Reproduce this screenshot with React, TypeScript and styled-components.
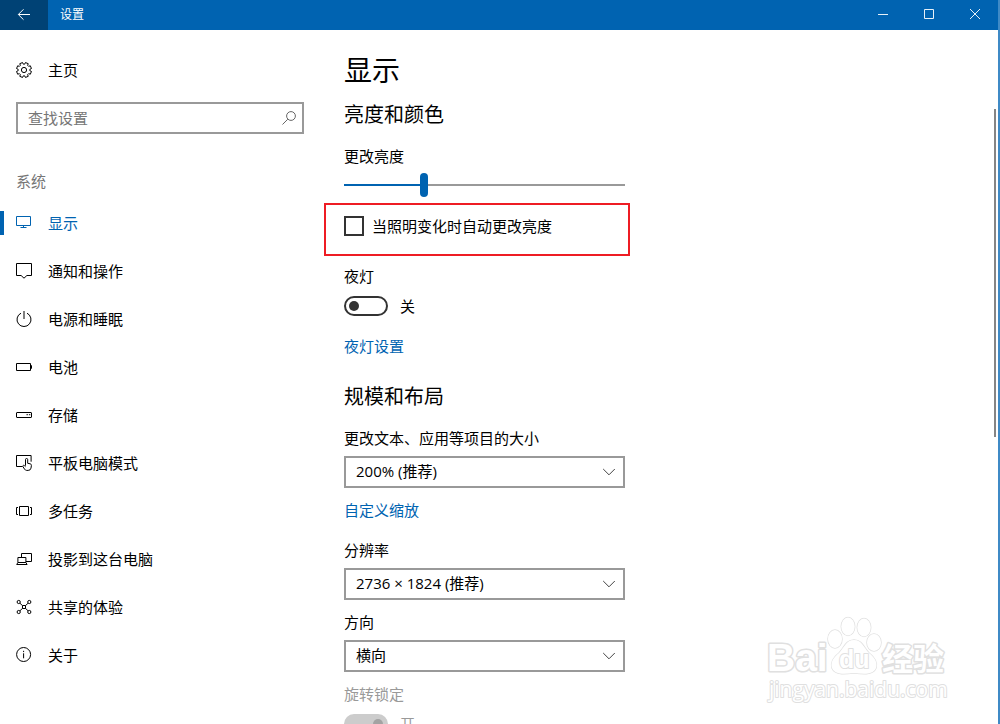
import React from "react";
import styled, { createGlobalStyle } from "styled-components";

const ACCENT = "#0063b1";

const GlobalStyle = createGlobalStyle`
  *, *::before, *::after { box-sizing: border-box; }
  body {
    margin: 0;
    background: #fff;
    color: #000;
    font-family: "Noto Sans CJK SC", "Noto Sans", sans-serif;
    font-size: 15px;
    line-height: 20px;
  }
  button, input, select { font: inherit; color: inherit; margin: 0; }
`;

const Window = styled.div`
  position: relative;
  display: flex;
  flex-direction: column;
  height: 100vh;
  overflow: hidden;
  border-right: 2px solid #3f8ac6;
`;

const TitleBar = styled.header`
  display: flex;
  flex: none;
  height: 30px;
  background: ${ACCENT};
  color: #fff;
`;

const BackButton = styled.button`
  display: flex;
  align-items: center;
  justify-content: center;
  width: 48px;
  padding: 0;
  border: 0;
  background: #004275;
  color: #fff;
`;

const WindowTitle = styled.span`
  flex: 1;
  padding-left: 12px;
  font-size: 12px;
  line-height: 28px;
`;

const CaptionButton = styled.button`
  display: flex;
  align-items: center;
  justify-content: center;
  width: 46px;
  padding: 0 0 2px;
  border: 0;
  background: transparent;
  color: #e6f0f8;
`;

const Body = styled.div`
  display: flex;
  flex: 1;
  min-height: 0;
`;

const Sidebar = styled.aside`
  flex: 0 0 320px;
  padding-top: 16px;
`;

const NavLink = styled.a<{ $active?: boolean }>`
  display: flex;
  align-items: center;
  gap: 16px;
  height: 48px;
  padding-left: 12px;
  text-decoration: none;
  color: ${(p) => (p.$active ? ACCENT : "#000")};
  &::before {
    content: "";
    width: 4px;
    height: 24px;
    margin: 0 -16px 0 -12px;
    background: ${(p) => (p.$active ? ACCENT : "transparent")};
  }
  svg { flex: none; margin-left: 12px; }
`;

const SearchBox = styled.label`
  display: flex;
  align-items: center;
  height: 32px;
  margin: 8px 16px 0;
  padding: 0 5px 0 10px;
  border: 2px solid #999;
  color: #666;
`;

const SearchInput = styled.input`
  flex: 1;
  min-width: 0;
  padding: 0;
  border: 0;
  outline: 0;
  background: transparent;
  &::placeholder { color: #767676; opacity: 1; }
`;

const GroupName = styled.h2`
  margin: 37px 16px 8px;
  font-size: 15px;
  font-weight: 400;
  line-height: 20px;
  color: #767676;
`;

const Content = styled.main`
  flex: 1;
  min-width: 0;
  overflow: hidden;
  padding: 19px 24px 0;
`;

const Column = styled.div`
  display: flex;
  flex-direction: column;
  align-items: stretch;
  max-width: 281px;
`;

const PageTitle = styled.h1`
  margin: 0;
  font-size: 28px;
  font-weight: 400;
  line-height: 40px;
`;

const SectionTitle = styled.h2<{ $top: number }>`
  margin: ${(p) => p.$top}px 0 18px;
  font-size: 20px;
  font-weight: 400;
  line-height: 28px;
`;

const FieldLabel = styled.label<{ $disabled?: boolean }>`
  color: ${(p) => (p.$disabled ? "#999" : "#000")};
`;

const Slider = styled.input<{ $fill: number }>`
  appearance: none;
  width: 100%;
  height: 24px;
  margin: 7px 0 6px;
  background: linear-gradient(to right, ${ACCENT} ${(p) => p.$fill}%, #999 ${(p) => p.$fill}%)
    center / 100% 2px no-repeat;
  &::-webkit-slider-thumb {
    appearance: none;
    width: 8px;
    height: 24px;
    border-radius: 4px;
    background: ${ACCENT};
  }
`;

const Highlight = styled.div`
  height: 53px;
  margin: 0 -5px 10px -20px;
  padding: 11px 0 0 18px;
  border: 2px solid #ee1c24;
`;

const CheckLabel = styled.label`
  display: flex;
  align-items: center;
  gap: 8px;
`;

const CheckBox = styled.input`
  appearance: none;
  width: 20px;
  height: 20px;
  border: 2px solid #333;
  background: #fff;
`;

const ToggleRow = styled.label<{ $disabled?: boolean }>`
  display: flex;
  align-items: center;
  gap: 12px;
  margin-top: 10px;
  color: ${(p) => (p.$disabled ? "#999" : "#000")};
`;

const Toggle = styled.input`
  appearance: none;
  display: flex;
  align-items: center;
  width: 44px;
  height: 20px;
  padding: 0 3px;
  border: 2px solid #333;
  border-radius: 10px;
  &::before {
    content: "";
    width: 10px;
    height: 10px;
    border-radius: 5px;
    background: #333;
  }
  &:checked { justify-content: flex-end; }
  &:disabled { border-color: #ccc; background: #ccc; }
  &:disabled::before { background: #a3a3a3; }
`;

const TextLink = styled.a<{ $top: number; $bottom?: number }>`
  align-self: flex-start;
  margin: ${(p) => p.$top}px 0 ${(p) => p.$bottom ?? 0}px;
  color: ${ACCENT};
  text-decoration: none;
`;

const SelectWrap = styled.div<{ $bottom?: number }>`
  display: grid;
  align-items: center;
  margin: 8px 0 ${(p) => p.$bottom ?? 0}px;
  > * { grid-area: 1 / 1; }
  svg { justify-self: end; margin-right: 9px; pointer-events: none; }
`;

const Select = styled.select`
  appearance: none;
  width: 100%;
  height: 32px;
  padding: 0 32px 2px 10px;
  border: 2px solid #999;
  border-radius: 0;
  background: #fff;
  font-family: "Open Sans", "Noto Sans CJK SC", sans-serif;
`;

const ScrollTrack = styled.div`
  flex: none;
  width: 4px;
  padding-top: 79px;
`;

const ScrollThumb = styled.div`
  width: 2px;
  height: 328px;
  background: #858585;
`;

const Watermark = styled.svg`
  position: absolute;
  right: 46px;
  bottom: 16px;
  pointer-events: none;
`;

type IconProps = { children: React.ReactNode; size?: number };

const Icon = ({ children, size = 16 }: IconProps) => (
  <svg width={size} height={size} viewBox={`0 0 ${size} ${size}`} fill="none" stroke="currentColor" aria-hidden="true">
    {children}
  </svg>
);

const gearPath = () => {
  const points: string[] = [];
  for (let tooth = 0; tooth < 8; tooth++) {
    const base = (tooth * Math.PI) / 4 + Math.PI / 8;
    const corners: [number, number][] = [[-0.27, 5.9], [-0.2, 7.6], [0.2, 7.6], [0.27, 5.9]];
    corners.forEach(([offset, radius]) => {
      const x = 8 + radius * Math.cos(base + offset);
      const y = 8 + radius * Math.sin(base + offset);
      points.push(`${x.toFixed(2)} ${y.toFixed(2)}`);
    });
  }
  return `M${points.join("L")}Z`;
};

const GearIcon = () => (
  <Icon><path d={gearPath()} strokeLinejoin="round" /><circle cx="8" cy="8" r="2.6" /></Icon>
);

const Chevron = () => (
  <svg width="14" height="8" viewBox="0 0 14 8" fill="none" stroke="#444" aria-hidden="true">
    <path d="M1.2 1L7 6.8L12.8 1" />
  </svg>
);

const items: { label: string; icon: React.ReactNode }[] = [
  {
    label: "显示",
    icon: <><path d="M.5 1.5h14v9H.5z" /><path d="M7.5 10.5v2M4.5 12.5h6" /></>,
  },
  {
    label: "通知和操作",
    icon: <path d="M.5 .5h15v12h-4.600L8 15.200L5.100 12.500H.5z" />,
  },
  {
    label: "电源和睡眠",
    icon: <><path d="M8 0v8" /><path d="M5 2.2A7 7 0 1 0 11 2.2" /></>,
  },
  {
    label: "电池",
    icon: <><path d="M.5 4.500h14v7H.5z" /><path d="M15.5 6.300v3.400" /></>,
  },
  {
    label: "存储",
    icon: <><rect x=".5" y="5.5" width="15" height="5" rx=".5" /><path d="M10.5 7.7h1.4M12.9 7.7h1.4" /></>,
  },
  {
    label: "平板电脑模式",
    icon: (
      <>
        <path d="M6.5 11.5H.5v-11h14.6v6.2" />
        <path d="M9.5 10.7V4.6a1.1 1.1 0 0 1 2.2 0v3.7l2.5.5q1.3.3 1.2 1.7l-.4 2.6q-.4 2.3-2.8 2.3h-1.6q-1.2 0-2-1.2L6.9 11.6q-.3-1 .6-1.3.7-.1 1.2.6l.8.8" />
      </>
    ),
  },
  {
    label: "多任务",
    icon: <><path d="M3.5 3.5h9v9h-9z" /><path d="M2 4.5H.5v7H2M14 4.5h1.5v7H14" /></>,
  },
  {
    label: "投影到这台电脑",
    icon: <><path d="M5.5 6.5v-4h10v8h-5.500" /><path d="M1.900 11.500v-5h8v5M.7 13.500l1.200-2h8l1.200 2z" /></>,
  },
  {
    label: "共享的体验",
    icon: (
      <>
        <circle cx="2.7" cy="3" r="1.6" /><circle cx="13.3" cy="3" r="1.6" />
        <circle cx="2.7" cy="13" r="1.6" /><circle cx="13.3" cy="13" r="1.6" />
        <path d="M3.9 4.2L6.6 6.7M12.1 4.2L9.4 6.7M3.9 11.8L6.6 9.3M12.1 11.8L9.4 9.3M6.5 6.5h3v3h-3z" />
      </>
    ),
  },
  {
    label: "关于",
    icon: <><circle cx="7.6" cy="7.5" r="7" /><path d="M7.6 6.3v5M7.6 3.8v1.3" /></>,
  },
];

type PickerProps = { id: string; label: string; options: string[]; bottom?: number };

const Picker = ({ id, label, options, bottom }: PickerProps) => (
  <>
    <FieldLabel htmlFor={id}>{label}</FieldLabel>
    <SelectWrap $bottom={bottom}>
      <Select id={id}>
        {options.map((o) => <option key={o}>{o}</option>)}
      </Select>
      <Chevron />
    </SelectWrap>
  </>
);

const BaiduMark = () => (
  <Watermark width="186" height="94" viewBox="0 0 186 94" fill="#fff" stroke="#e0e0e0" strokeWidth="3" paintOrder="stroke" strokeLinejoin="round" role="img" aria-label="Baidu 经验">
    <text x="1" y="57" fontFamily="Liberation Sans, sans-serif" fontWeight="700" fontSize="39">Bai</text>
    <g strokeWidth="1.5">
      <ellipse cx="69" cy="25" rx="7" ry="9" />
      <ellipse cx="82" cy="12.500" rx="6.700" ry="9" />
      <ellipse cx="98" cy="13.500" rx="6.700" ry="9" />
      <ellipse cx="108" cy="28.500" rx="7" ry="8.500" />
      <path d="M88 26C96 26 98 34 103 39C108 43 112 48 110 54C107 61 98 60 88 59C78 60 69 61 66 54C64 48 68 43 73 39C78 34 80 26 88 26Z" />
    </g>
    <text x="73" y="54" fontFamily="Liberation Sans, sans-serif" fontWeight="700" fontSize="25" strokeWidth="2">du</text>
    <text x="116" y="56" fontFamily="Noto Sans CJK SC, sans-serif" fontWeight="700" fontSize="31">经验</text>
    <text x="3" y="83" fontFamily="Open Sans, sans-serif" fontWeight="400" fontSize="21" strokeWidth="2">jingyan.baidu.com</text>
  </Watermark>
);

export default function App() {
  const [brightness, setBrightness] = React.useState(28);
  return (
    <>
      <GlobalStyle />
      <Window>
        <TitleBar>
          <BackButton aria-label="返回">
            <Icon><path d="M14 7.500H2.500M7.500 2.300L2.300 7.500L7.500 12.700" /></Icon>
          </BackButton>
          <WindowTitle>设置</WindowTitle>
          <CaptionButton aria-label="最小化"><Icon size={12}><path d="M1 6.500h10" /></Icon></CaptionButton>
          <CaptionButton aria-label="最大化"><Icon size={12}><path d="M1.500 1.500h9v9h-9z" /></Icon></CaptionButton>
          <CaptionButton aria-label="关闭"><Icon size={12}><path d="M1 1l10 10M11 1L1 11" /></Icon></CaptionButton>
        </TitleBar>
        <Body>
          <Sidebar>
            <NavLink href="#home"><GearIcon />主页</NavLink>
            <SearchBox>
              <SearchInput type="text" placeholder="查找设置" aria-label="查找设置" />
              <Icon><circle cx="10" cy="6" r="4.400" /><path d="M6.800 9.200L1.500 14.500" /></Icon>
            </SearchBox>
            <GroupName>系统</GroupName>
            <nav>
              {items.map((item, i) => (
                <NavLink key={item.label} href={`#${item.label}`} $active={i === 0}>
                  <Icon>{item.icon}</Icon>
                  {item.label}
                </NavLink>
              ))}
            </nav>
          </Sidebar>
          <Content>
            <Column>
              <PageTitle>显示</PageTitle>
              <SectionTitle $top={11}>亮度和颜色</SectionTitle>
              <FieldLabel htmlFor="brightness">更改亮度</FieldLabel>
              <Slider
                id="brightness"
                type="range"
                min={0}
                max={100}
                value={brightness}
                $fill={brightness}
                onChange={(e) => setBrightness(Number(e.target.value))}
              />
              <Highlight>
                <CheckLabel><CheckBox type="checkbox" />当照明变化时自动更改亮度</CheckLabel>
              </Highlight>
              <FieldLabel htmlFor="night">夜灯</FieldLabel>
              <ToggleRow><Toggle id="night" type="checkbox" role="switch" />关</ToggleRow>
              <TextLink href="#night" $top={20}>夜灯设置</TextLink>
              <SectionTitle $top={26}>规模和布局</SectionTitle>
              <Picker id="scale" label="更改文本、应用等项目的大小" options={["200% (推荐)", "100%", "150%"]} />
              <TextLink href="#scaling" $top={12} $bottom={20}>自定义缩放</TextLink>
              <Picker id="resolution" label="分辨率" options={["2736 × 1824 (推荐)", "1920 × 1080"]} bottom={12} />
              <Picker id="orientation" label="方向" options={["横向", "纵向"]} bottom={12} />
              <FieldLabel htmlFor="lock" $disabled>旋转锁定</FieldLabel>
              <ToggleRow $disabled>
                <Toggle id="lock" type="checkbox" role="switch" defaultChecked disabled />开
              </ToggleRow>
            </Column>
          </Content>
          <ScrollTrack><ScrollThumb /></ScrollTrack>
        </Body>
        <BaiduMark />
      </Window>
    </>
  );
}
